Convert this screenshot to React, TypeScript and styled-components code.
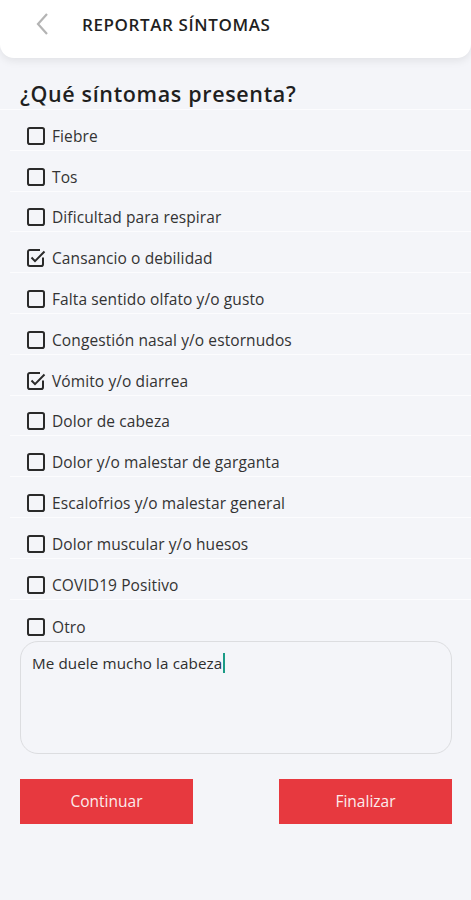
import React from "react";
import styled, { createGlobalStyle } from "styled-components";

const Global = createGlobalStyle`
  html, body { margin: 0; padding: 0; background: #f4f5f9; }
  body { font-family: "Open Sans", "Noto Sans", sans-serif; color: #2b2b2b; }
  * { box-sizing: border-box; }
`;

const Page = styled.div`
  width: 471px;
  min-height: 900px;
  background: #f4f5f9;
  display: flex;
  flex-direction: column;
`;

const Header = styled.header`
  height: 58px;
  background: #ffffff;
  border-radius: 0 0 14px 14px;
  box-shadow: 0 3px 8px rgba(0, 0, 0, 0.08);
  display: flex;
  align-items: center;
  padding-left: 31px;
  gap: 27px;
`;

const Back = styled.button`
  border: 0;
  background: none;
  padding: 0;
  width: 24px;
  height: 24px;
  margin-top: -10px;
  display: flex;
  align-items: center;
  justify-content: center;
`;

const Title = styled.h1`
  margin: -10px 0 0;
  font-size: 17px;
  font-weight: 600;
  letter-spacing: 0.6px;
  color: #1f1f1f;
`;

const Heading = styled.h2`
  margin: 23px 0 0;
  padding: 0 20px;
  height: 29px;
  font-size: 21.5px;
  font-weight: 600;
  letter-spacing: 0.65px;
  color: #1f1f1f;
  line-height: 26px;
  border-bottom: 1px solid #fcfcfe;
`;

const List = styled.ul`
  list-style: none;
  margin: 0;
  padding: 0 0 0 10px;
`;

const Row = styled.li<{ $last?: boolean }>`
  height: ${(p) => (p.$last ? "41px" : "40.8px")};
  display: flex;
  align-items: flex-end;
  padding: 0 0 4px 16px;
  gap: 6px;
  border-bottom: ${(p) => (p.$last ? "none" : "1px solid #fcfcfe")};
`;

const Box = styled.span`
  width: 20px;
  height: 20px;
  display: flex;
`;

const Label = styled.span`
  font-size: 15.5px;
  line-height: 20px;
  color: #333;
  letter-spacing: 0.1px;
`;

const TextBox = styled.div`
  margin: 0 19px 0 20px;
  height: 113px;
  border: 1px solid #dcdde0;
  border-radius: 18px;
  padding: 11px 11px;
  font-size: 15.2px;
  color: #2e2e2e;
  letter-spacing: 0.1px;
  display: flex;
  align-items: flex-start;
`;

const Caret = styled.span`
  display: inline-block;
  width: 2px;
  height: 20px;
  background: #1a9b86;
  margin-left: 1px;
`;

const Actions = styled.div`
  display: flex;
  justify-content: space-between;
  margin: 25px 19px 0 20px;
`;

const Button = styled.button`
  width: 173px;
  height: 45px;
  border: 0;
  background: #e7393f;
  color: #fbecec;
  font-family: "Open Sans", sans-serif;
  font-size: 15.5px;
  padding: 0;
`;

function Check({ checked }: { checked: boolean }) {
  return (
    <Box>
      <svg width="20" height="20" viewBox="0 0 20 20">
        {checked ? (
          <>
            <path
              d="M17 9.5V16.2a1.8 1.8 0 0 1-1.8 1.8H3.8A1.8 1.8 0 0 1 2 16.2V3.8A1.8 1.8 0 0 1 3.8 2H14"
              fill="none"
              stroke="#2a2a2a"
              strokeWidth="2"
            />
            <path d="M5.5 9.5l3.5 3.6L18.5 3.5" fill="none" stroke="#2a2a2a" strokeWidth="2" />
          </>
        ) : (
          <rect x="2" y="2" width="16" height="16" rx="1.8" fill="none" stroke="#2a2a2a" strokeWidth="2" />
        )}
      </svg>
    </Box>
  );
}

const items: [string, boolean][] = [
  ["Fiebre", false],
  ["Tos", false],
  ["Dificultad para respirar", false],
  ["Cansancio o debilidad", true],
  ["Falta sentido olfato y/o gusto", false],
  ["Congestión nasal y/o estornudos", false],
  ["Vómito y/o diarrea", true],
  ["Dolor de cabeza", false],
  ["Dolor y/o malestar de garganta", false],
  ["Escalofrios y/o malestar general", false],
  ["Dolor muscular y/o huesos", false],
  ["COVID19 Positivo", false],
  ["Otro", false],
];

export default function App() {
  return (
    <Page>
      <Global />
      <Header>
        <Back aria-label="Volver">
          <svg width="16" height="24" viewBox="0 0 16 24">
            <path d="M12 2L3 12l9 10" fill="none" stroke="#b4b4b4" strokeWidth="2.2" />
          </svg>
        </Back>
        <Title>REPORTAR SÍNTOMAS</Title>
      </Header>
      <Heading>¿Qué síntomas presenta?</Heading>
      <List>
        {items.map(([t, c], i) => (
          <Row key={t} $last={i === items.length - 1}>
            <Check checked={c} />
            <Label>{t}</Label>
          </Row>
        ))}
      </List>
      <TextBox>
        Me duele mucho la cabeza
        <Caret />
      </TextBox>
      <Actions>
        <Button>Continuar</Button>
        <Button>Finalizar</Button>
      </Actions>
    </Page>
  );
}
